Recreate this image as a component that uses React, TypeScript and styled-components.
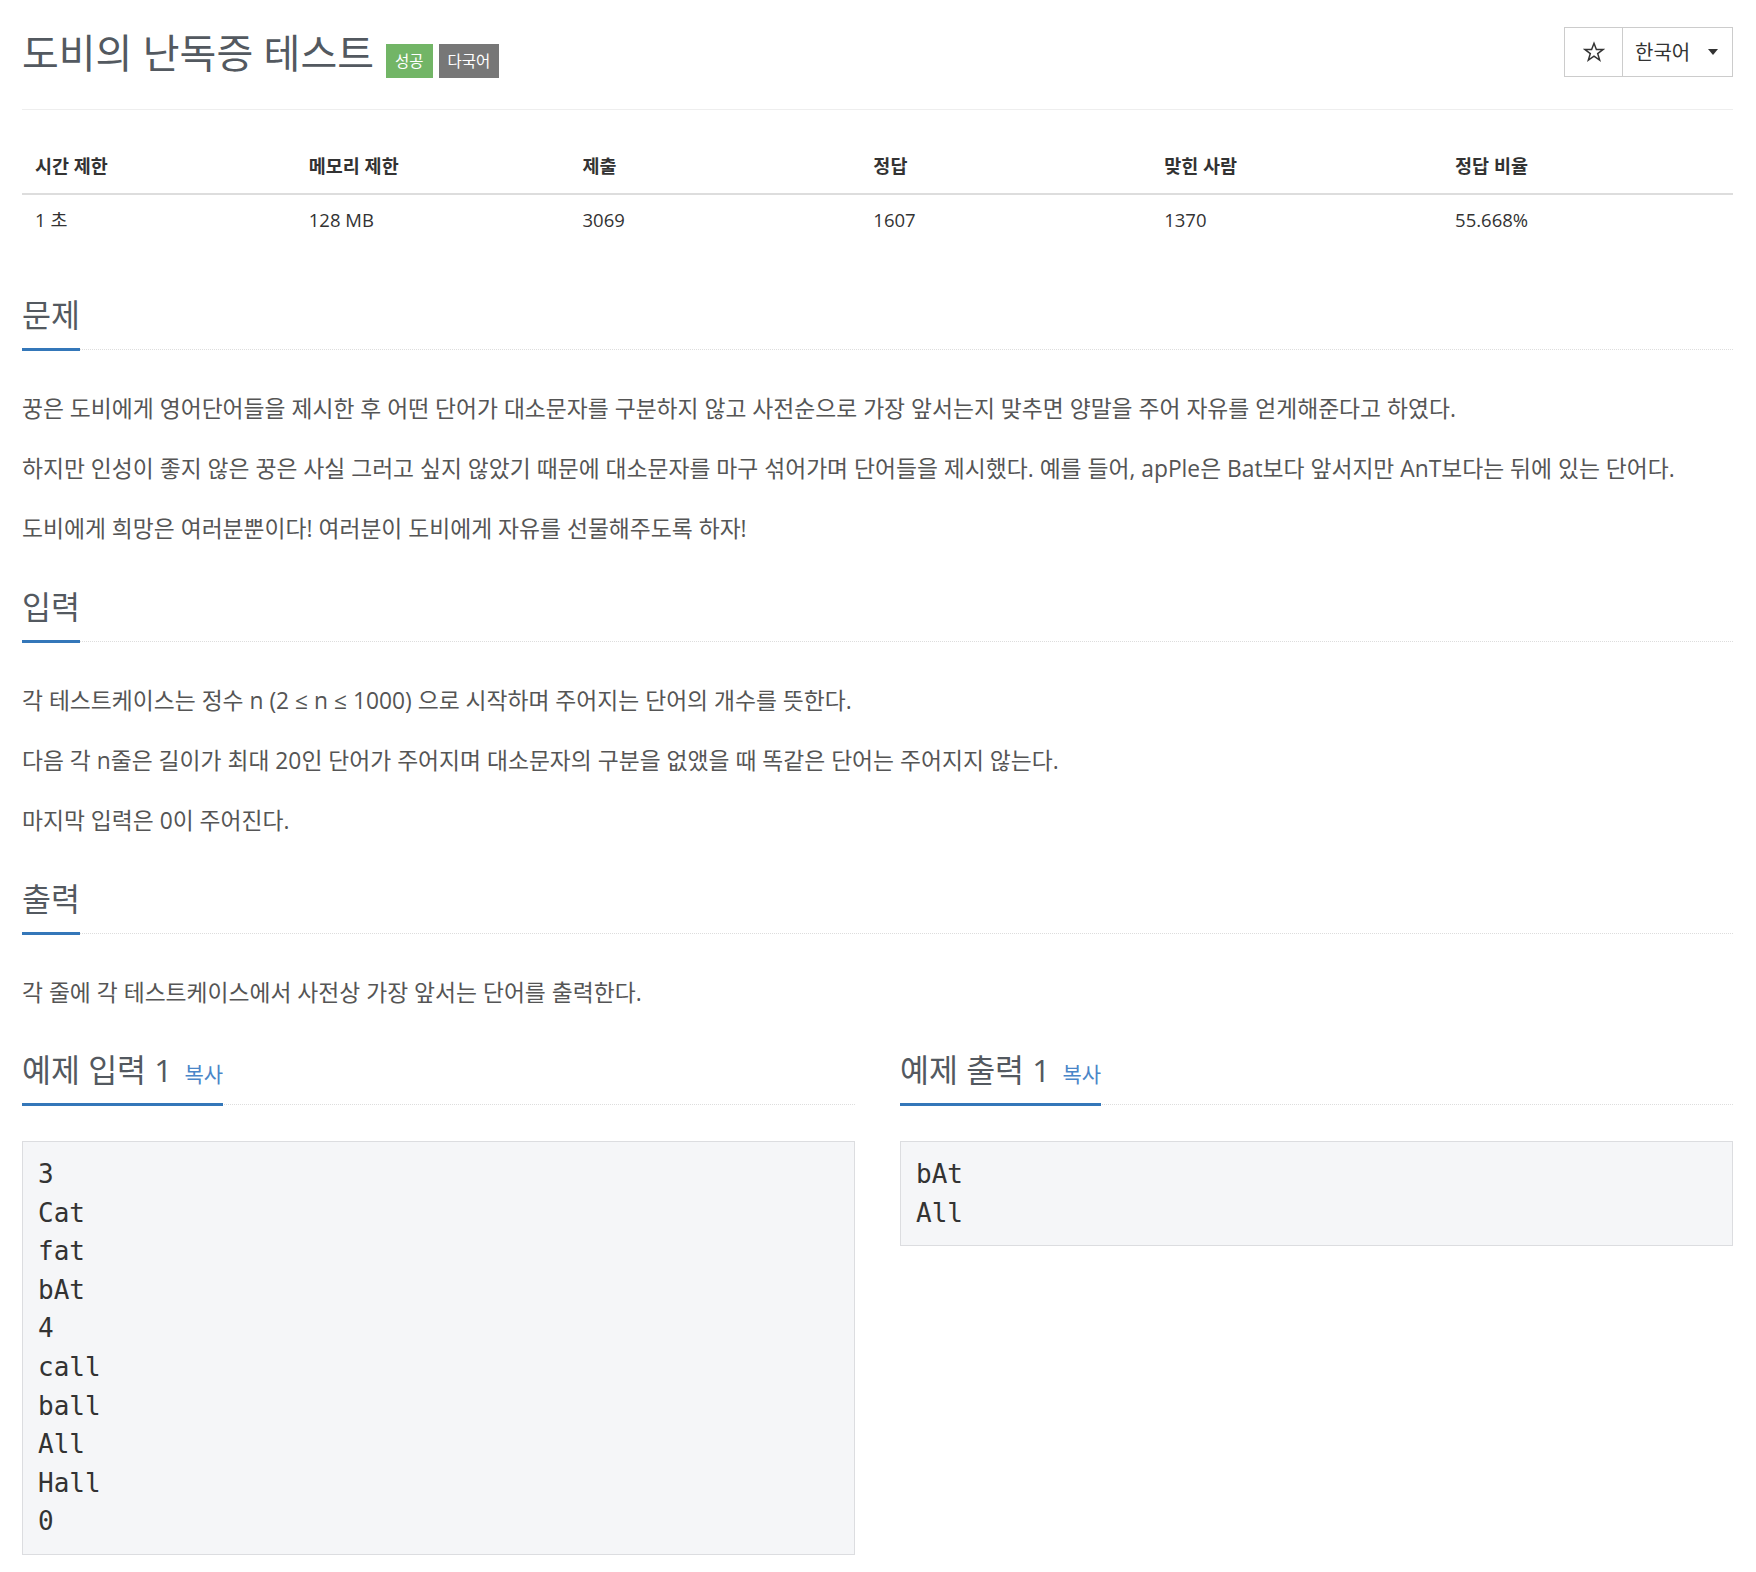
import styled, { createGlobalStyle } from 'styled-components';

const GlobalStyle = createGlobalStyle`
    body {
        margin: 0;
        background: #fff;
        font-family: "Open Sans", "Noto Sans CJK KR", sans-serif;
        color: #555;
    }
`;

const Page = styled.div`
    padding: 25px 23px 20px 22px;
`;

const Header = styled.div`
    display: flex;
    align-items: center;
    justify-content: space-between;
    padding-bottom: 31px;
    border-bottom: 1px solid #eee;
`;

const TitleRow = styled.div`
    display: flex;
    align-items: center;
`;

const Title = styled.h1`
    margin: 2px 12px 0 0;
    font-size: 40px;
    line-height: 44px;
    font-weight: 400;
    color: #535960;
`;

const Badge = styled.span<{ $bg: string }>`
    display: inline-block;
    margin: 19px 6px 0 0;
    padding: 0 9px;
    height: 34px;
    line-height: 34px;
    font-size: 15.5px;
    color: #fff;
    background: ${(p) => p.$bg};
`;

const BtnGroup = styled.div`
    display: flex;
    height: 50px;
    border: 1px solid #ccc;
    box-sizing: border-box;
`;

const StarBtn = styled.button`
    width: 58px;
    display: flex;
    align-items: center;
    justify-content: center;
    border: none;
    border-right: 1px solid #ccc;
    background: #fff;
    padding: 0;
`;

const LangBtn = styled.button`
    width: 109px;
    display: flex;
    align-items: center;
    gap: 18px;
    padding: 0 0 0 12px;
    border: none;
    background: #fff;
    font-family: inherit;
    font-size: 20px;
    color: #333;
`;

const Caret = styled.span`
    width: 0;
    height: 0;
    border-top: 6px solid #333;
    border-left: 5.5px solid transparent;
    border-right: 5.5px solid transparent;
`;

const InfoTable = styled.table`
    width: 100%;
    margin: 31px 0 53px;
    border-collapse: collapse;
    font-size: 18.5px;
    color: #333;

    th {
        text-align: left;
        font-weight: 700;
        padding: 12px 13px 14px;
        line-height: 26px;
        border-bottom: 2px solid #ddd;
    }

    td {
        padding: 12px 13px 11px;
        line-height: 26px;
    }
`;

const Section = styled.section`
    margin-top: 38px;

    &:first-of-type {
        margin-top: 0;
    }
`;

const Headline = styled.div`
    border-bottom: 1px dotted #ddd;
`;

const HeadText = styled.h2`
    display: inline-block;
    margin: 0 0 -2px;
    padding-bottom: 16px;
    border-bottom: 3px solid #3477b9;
    font-size: 31.5px;
    line-height: 35px;
    font-weight: 400;
    color: #535960;
`;

const CopyLink = styled.span`
    margin-left: 4px;
    font-size: 21px;
    line-height: 1;
    color: #4a86c8;
`;

const Body = styled.div`
    margin-top: 36px;
    font-size: 22.8px;
    line-height: 45px;

    p {
        margin: 0 0 15px;
    }
`;

const SampleGrid = styled.div`
    display: grid;
    grid-template-columns: 1fr 1fr;
    gap: 45px;
    margin-top: 37px;
    align-items: start;
`;

const SampleData = styled.pre`
    margin: 36px 0 0;
    padding: 13px 15px;
    background: #f5f6f8;
    border: 1.5px solid #dcdde0;
    font-family: "DejaVu Sans Mono", monospace;
    font-size: 26px;
    line-height: 38.6px;
    color: #333;
`;

function StarIcon() {
    return (
        <svg width="22" height="22" viewBox="0 0 24 24" fill="none" stroke="#333" strokeWidth="1.6" strokeLinejoin="miter">
            <polygon points="12,2.5 14.6,9.3 21.8,9.3 16,13.7 18.2,20.8 12,16.5 5.8,20.8 8,13.7 2.2,9.3 9.4,9.3" />
        </svg>
    );
}

const info = [
    ['시간 제한', '1 초', '16%'],
    ['메모리 제한', '128 MB', '16%'],
    ['제출', '3069', '17%'],
    ['정답', '1607', '17%'],
    ['맞힌 사람', '1370', '17%'],
    ['정답 비율', '55.668%', '17%'],
];

const sampleIn = '3\nCat\nfat\nbAt\n4\ncall\nball\nAll\nHall\n0';
const sampleOut = 'bAt\nAll';

export default function App() {
    return (
        <Page>
            <GlobalStyle />
            <Header>
                <TitleRow>
                    <Title>도비의 난독증 테스트</Title>
                    <Badge $bg="#72b566">성공</Badge>
                    <Badge $bg="#777">다국어</Badge>
                </TitleRow>
                <BtnGroup>
                    <StarBtn><StarIcon /></StarBtn>
                    <LangBtn>한국어 <Caret /></LangBtn>
                </BtnGroup>
            </Header>

            <InfoTable>
                <colgroup>
                    {info.map(([h, , w]) => <col key={h} style={{ width: w }} />)}
                </colgroup>
                <thead>
                    <tr>{info.map(([h]) => <th key={h}>{h}</th>)}</tr>
                </thead>
                <tbody>
                    <tr>{info.map(([h, v]) => <td key={h}>{v}</td>)}</tr>
                </tbody>
            </InfoTable>

            <Section>
                <Headline><HeadText>문제</HeadText></Headline>
                <Body>
                    <p>꿍은 도비에게 영어단어들을 제시한 후 어떤 단어가 대소문자를 구분하지 않고 사전순으로 가장 앞서는지 맞추면 양말을 주어 자유를 얻게해준다고 하였다.</p>
                    <p>하지만 인성이 좋지 않은 꿍은 사실 그러고 싶지 않았기 때문에 대소문자를 마구 섞어가며 단어들을 제시했다. 예를 들어, apPle은 Bat보다 앞서지만 AnT보다는 뒤에 있는 단어다.</p>
                    <p>도비에게 희망은 여러분뿐이다! 여러분이 도비에게 자유를 선물해주도록 하자!</p>
                </Body>
            </Section>

            <Section>
                <Headline><HeadText>입력</HeadText></Headline>
                <Body>
                    <p>각 테스트케이스는 정수 n (2 ≤ n ≤ 1000) 으로 시작하며 주어지는 단어의 개수를 뜻한다.</p>
                    <p>다음 각 n줄은 길이가 최대 20인 단어가 주어지며 대소문자의 구분을 없앴을 때 똑같은 단어는 주어지지 않는다.</p>
                    <p>마지막 입력은 0이 주어진다.</p>
                </Body>
            </Section>

            <Section>
                <Headline><HeadText>출력</HeadText></Headline>
                <Body>
                    <p>각 줄에 각 테스트케이스에서 사전상 가장 앞서는 단어를 출력한다.</p>
                </Body>
            </Section>

            <SampleGrid>
                <div>
                    <Headline><HeadText>예제 입력 1 <CopyLink>복사</CopyLink></HeadText></Headline>
                    <SampleData>{sampleIn}</SampleData>
                </div>
                <div>
                    <Headline><HeadText>예제 출력 1 <CopyLink>복사</CopyLink></HeadText></Headline>
                    <SampleData>{sampleOut}</SampleData>
                </div>
            </SampleGrid>
        </Page>
    );
}
